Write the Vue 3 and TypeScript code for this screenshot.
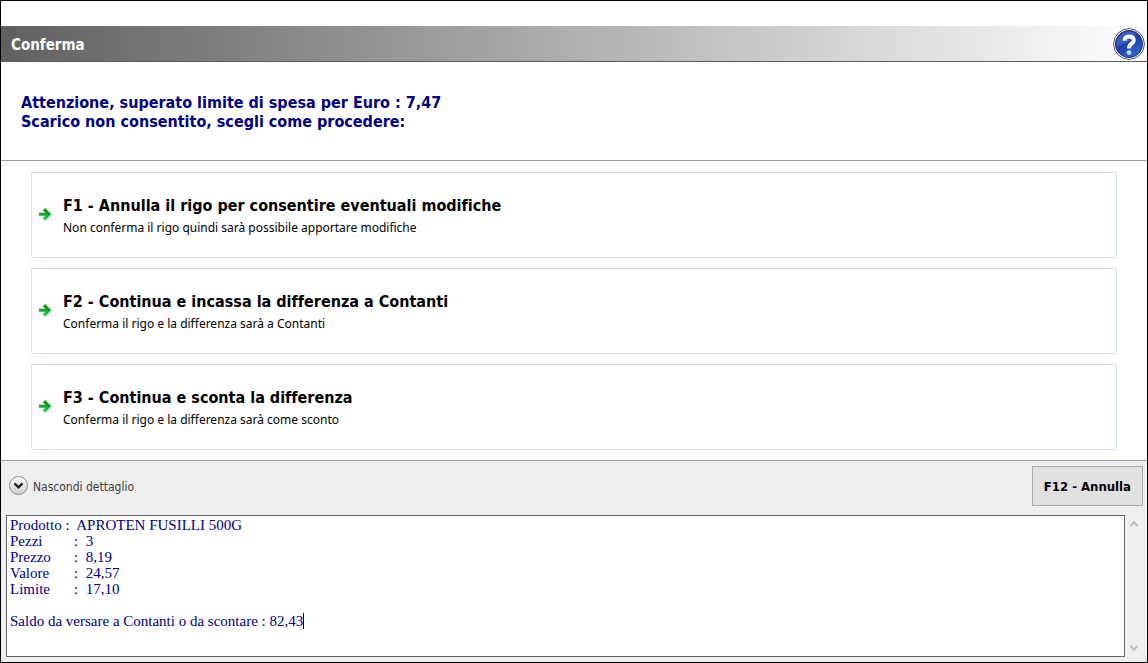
<script setup lang="ts">
import { nextTick, onMounted, ref } from 'vue'

interface Choice {
  key: string
  title: string
  description: string
}

const choices: Choice[] = [
  {
    key: 'F1',
    title: 'Annulla il rigo per consentire eventuali modifiche',
    description: 'Non conferma il rigo quindi sarà possibile apportare modifiche',
  },
  {
    key: 'F2',
    title: 'Continua e incassa la differenza a Contanti',
    description: 'Conferma il rigo e la differenza sarà a Contanti',
  },
  {
    key: 'F3',
    title: 'Continua e sconta la differenza',
    description: 'Conferma il rigo e la differenza sarà come sconto',
  },
]

const detail = ref<string>(
  [
    'Prodotto :  APROTEN FUSILLI 500G',
    'Pezzi\t:  3',
    'Prezzo\t:  8,19',
    'Valore\t:  24,57',
    'Limite\t:  17,10',
    '',
    'Saldo da versare a Contanti o da scontare : 82,43',
  ].join('\n'),
)

const open = ref(true)
const box = ref<HTMLTextAreaElement | null>(null)
const caret = ref({ left: 0, top: 0 })

function placeCaret(): void {
  const el = box.value
  if (!el) return
  const style = getComputedStyle(el)
  const ctx = document.createElement('canvas').getContext('2d')
  if (!ctx) return
  ctx.font = `${style.fontSize} ${style.fontFamily}`
  const lines = detail.value.split('\n')
  const width = ctx.measureText(lines[lines.length - 1]).width
  caret.value = {
    left: Math.round(parseInt(style.paddingLeft) + 1 + width),
    top: parseInt(style.paddingTop) + 1 + (lines.length - 1) * parseInt(style.lineHeight),
  }
}

async function toggle(): Promise<void> {
  open.value = !open.value
  await nextTick()
  placeCaret()
}

onMounted(placeCaret)
</script>

<template>
  <main class="dialog">
    <header class="titlebar">
      <h1>Conferma</h1>
      <button class="help" type="button" aria-label="Aiuto">
        <svg viewBox="0 0 32 32" width="32" height="32" aria-hidden="true">
          <defs>
            <linearGradient id="helpBlue" x1="0" y1="0" x2="0.6" y2="1">
              <stop offset="0" stop-color="#2a4aa8" />
              <stop offset="0.5" stop-color="#1c3ca8" />
              <stop offset="1" stop-color="#3464cc" />
            </linearGradient>
          </defs>
          <circle cx="16" cy="16" r="15.4" fill="#fff" stroke="#55585f" stroke-width="1" />
          <circle cx="16" cy="16" r="13.6" fill="url(#helpBlue)" stroke="#1c2f86" stroke-width="1" />
          <path d="M3.5 18C8 18 19 14 23 5.500A13 13 0 0 0 3.500 18z" fill="#fff" opacity="0.14" />
          <path
            d="M11.600 12.800C11.600 9.600 13.400 8.400 16.200 8.400C19.200 8.400 20.800 9.800 20.800 12.200C20.800 15.600 16 15.400 16 20.400"
            fill="none" stroke="#f4f8ff" stroke-width="4"
          />
          <circle cx="16" cy="24.600" r="2.400" fill="#b4e2f8" />
        </svg>
      </button>
    </header>

    <section class="message">
      <p>Attenzione, superato limite di spesa per Euro : 7,47</p>
      <p>Scarico non consentito, scegli come procedere:</p>
    </section>

    <section class="choices">
      <button v-for="c in choices" :key="c.key" class="choice" type="button">
        <svg class="arrow" viewBox="0 0 14 14" width="14" height="14" aria-hidden="true">
          <defs>
            <linearGradient :id="'green' + c.key" x1="0" y1="0" x2="0" y2="1">
              <stop offset="0" stop-color="#0b8a1c" />
              <stop offset="0.5" stop-color="#12a52c" />
              <stop offset="1" stop-color="#1fe04c" />
            </linearGradient>
          </defs>
          <path
            d="M1 4.800H7.400L4.800 2.200L7.200 0L13.400 6.200L7.200 12.400L4.800 10.200L7.400 7.800H1z"
            :fill="`url(#green${c.key})`"
          />
        </svg>
        <span class="text">
          <strong>{{ c.key }} - {{ c.title }}</strong>
          <span>{{ c.description }}</span>
        </span>
      </button>
    </section>

    <footer class="footer">
      <div class="bar">
        <button class="toggle" type="button" :aria-expanded="open" @click="toggle">
          <svg viewBox="0 0 20 20" width="20" height="20" aria-hidden="true">
            <defs>
              <linearGradient id="knob" x1="0" y1="0" x2="0" y2="1">
                <stop offset="0" stop-color="#fdfdfd" />
                <stop offset="1" stop-color="#cfcfcf" />
              </linearGradient>
            </defs>
            <circle cx="10.500" cy="9.500" r="9" fill="url(#knob)" stroke="#8a8a8a" />
            <path d="M6.500 7.400L10.500 11.400L14.500 7.400" fill="none" stroke="#222" stroke-width="2.400" />
          </svg>
          <span>Nascondi dettaglio</span>
        </button>
        <button class="cancel" type="button">F12 - Annulla</button>
      </div>
      <div v-if="open" class="detail">
        <div class="field">
          <textarea
            ref="box" v-model="detail" aria-label="Dettaglio" spellcheck="false"
            @input="placeCaret"
          ></textarea>
          <i class="caret" :style="{ left: caret.left + 'px', top: caret.top + 'px' }"></i>
        </div>
        <div class="scroll" aria-hidden="true">
          <svg viewBox="0 0 10 8" width="10" height="8">
            <path d="M1.500 6L5 2.200L8.500 6" fill="none" stroke="#bcbcbc" stroke-width="2" />
          </svg>
          <svg viewBox="0 0 10 8" width="10" height="8">
            <path d="M1.500 2L5 5.800L8.500 2" fill="none" stroke="#bcbcbc" stroke-width="2" />
          </svg>
        </div>
      </div>
    </footer>
  </main>
</template>

<style>
body {
  margin: 0;
}
</style>

<style scoped>
.dialog {
  box-sizing: border-box;
  min-height: 100vh;
  display: flex;
  flex-direction: column;
  border: 1px solid #000;
  padding-top: 25px;
  background: #fff;
  color: #000;
  font-family: Tahoma, "DejaVu Sans Condensed", "DejaVu Sans", sans-serif;
  font-variant-ligatures: none;
}

button {
  margin: 0;
  font-family: inherit;
  font-variant-ligatures: none;
  color: inherit;
  cursor: pointer;
}

svg {
  display: block;
  flex: none;
}

.titlebar {
  display: flex;
  align-items: center;
  justify-content: space-between;
  height: 35px;
  padding: 0 2px 0 10px;
  border-bottom: 1px solid #5c5c60;
  background: linear-gradient(90deg, #606060, #fff);
}

h1 {
  margin: 0;
  padding-top: 2px;
  font-size: 15px;
  line-height: 20px;
  color: #fff;
}

.help {
  padding: 0;
  border: 0;
  background: none;
}

.message {
  padding: 31px 20px 29px;
  border-bottom: 1px solid #9c9ca4;
  color: #000080;
  font-size: 16px;
  font-weight: bold;
  line-height: 19px;
}

.message p {
  margin: 0;
}

.choices {
  display: grid;
  gap: 10px;
  padding: 11px 30px 10px;
}

.choice {
  display: flex;
  align-items: center;
  gap: 11px;
  min-height: 86px;
  padding: 0 6px;
  border: 1px solid #d3e1ef;
  border-radius: 2px;
  background: #fff;
  text-align: left;
}

.text {
  display: grid;
  gap: 3px;
  padding-top: 2px;
  font-family: Tahoma, "Noto Sans", sans-serif;
  font-size: 12px;
  line-height: 18px;
}

.text strong {
  font-family: Tahoma, "DejaVu Sans Condensed", "DejaVu Sans", sans-serif;
  font-size: 16px;
  line-height: 20px;
}

.footer {
  flex: 1;
  display: flex;
  flex-direction: column;
  gap: 9px;
  padding: 5px 4px 5px 5px;
  border-top: 1px solid #a0a0a0;
  background: #efefef;
}

.bar {
  display: flex;
  align-items: center;
  justify-content: space-between;
}

.toggle {
  display: flex;
  align-items: center;
  gap: 5px;
  padding: 0 2px;
  border: 0;
  background: none;
  color: #3c3c3c;
  font-size: 12px;
  line-height: 16px;
}

.toggle span {
  padding-top: 2px;
}

.cancel {
  min-height: 40px;
  padding: 0 11px;
  border: 1px solid #a8a8a8;
  background: #e1e1e1;
  color: #000;
  font-size: 13px;
  font-weight: bold;
}

.detail {
  flex: 1;
  display: flex;
}

.field {
  position: relative;
  flex: 1;
  display: flex;
}

textarea {
  flex: 1;
  box-sizing: border-box;
  min-height: 142px;
  margin: 0;
  padding: 1px 3px;
  border: 1px solid #646464;
  border-radius: 0;
  outline: 0;
  resize: none;
  overflow: hidden;
  background: #fff;
  color: #000080;
  font-family: Georgia, "Liberation Serif", serif;
  font-size: 15px;
  line-height: 16px;
  tab-size: 64px;
}

.caret {
  position: absolute;
  width: 1px;
  height: 16px;
  background: #000;
}

.scroll {
  display: flex;
  flex-direction: column;
  align-items: center;
  justify-content: space-between;
  width: 18px;
  padding: 5px 0;
}
</style>
